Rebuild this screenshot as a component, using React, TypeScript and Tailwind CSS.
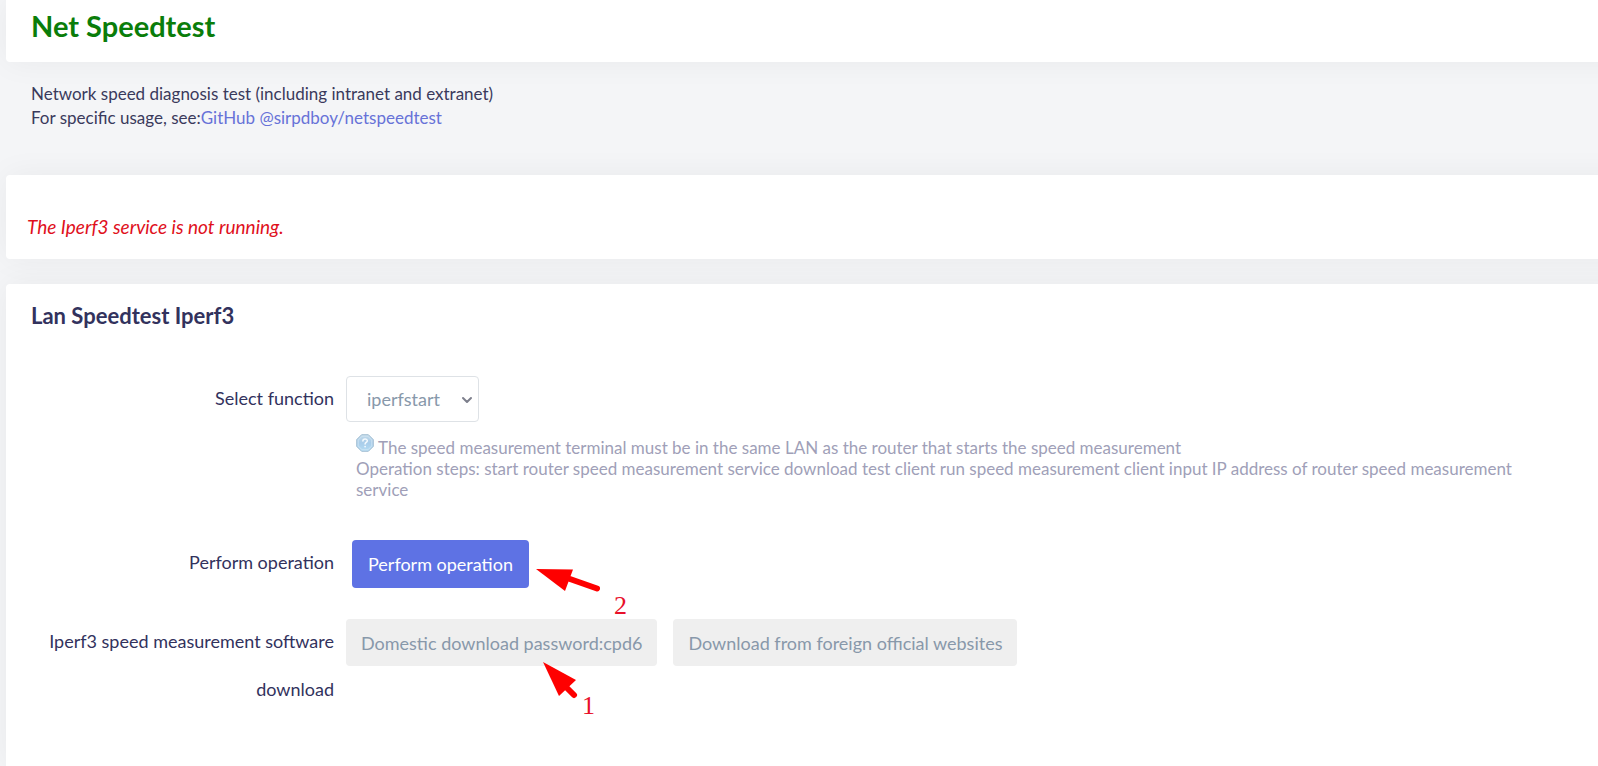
import type { ReactNode } from "react"
import { ChevronDown } from "lucide-react"
import { clsx } from "clsx"

interface CardProps {
  className?: string
  children: ReactNode
}

// Cards bleed past the right edge of the window
function Card({ className, children }: CardProps) {
  return (
    <section className={clsx("-mr-8 bg-white shadow-[0_0_32px_0_rgba(0,0,0,0.05)]", className)}>
      {children}
    </section>
  )
}

interface FieldRowProps {
  label: string
  htmlFor: string
  className?: string
  children: ReactNode
}

function FieldRow({ label, htmlFor, className, children }: FieldRowProps) {
  return (
    <div className={clsx("flex items-start gap-3", className)}>
      <label htmlFor={htmlFor} className="-mt-0.5 w-[328px] shrink-0 pl-6 text-right leading-[48px]">
        {label}
      </label>
      <div className="min-w-0 flex-1">{children}</div>
    </div>
  )
}

function HelpIcon() {
  return (
    <svg viewBox="0 0 18 18" className="mr-1 inline-block size-[18px] -translate-y-0.5 align-baseline" aria-hidden="true">
      <defs>
        <linearGradient id="help-fill" x1="0" y1="0" x2="0" y2="1">
          <stop offset="0" stopColor="#c3d9e8" />
          <stop offset="0.5" stopColor="#a9cdea" />
          <stop offset="1" stopColor="#b4dcf4" />
        </linearGradient>
      </defs>
      <path d="M5.6 0.7h6.8l4.9 4.9v6.8l-4.9 4.9H5.6L0.7 12.4V5.6z" fill="url(#help-fill)" stroke="#a4bfd3" strokeLinejoin="round" />
      <path d="M6.1 2.2h5.8l3.9 3.9v5.8l-3.9 3.9H6.1l-3.9-3.9V6.1z" fill="none" stroke="#d3e7f4" strokeWidth="0.8" />
      <path d="M6.9 7c0-2.6 4.4-2.5 4.4-0.2 0 1.6-2.2 1.5-2.2 3.2" fill="none" stroke="#f4fafe" strokeWidth="1.5" strokeLinecap="round" />
      <circle cx="9.1" cy="12.6" r="0.9" fill="#f4fafe" />
    </svg>
  )
}

const downloads = [
  { id: "download-domestic", text: "Domestic download password:cpd6" },
  { id: "download-foreign", text: "Download from foreign official websites" },
]

export default function App() {
  return (
    <main className="min-h-screen overflow-x-hidden bg-[#f4f5f7] pl-[6px] font-['Lato','Open_Sans',sans-serif] text-lg text-[#32325d]">
      <Card className="rounded-bl px-[25px] pt-2 pb-[18px]">
        <h1 className="text-[29px] leading-9 font-bold text-[#0a7d0a]">Net Speedtest</h1>
      </Card>

      <p className="px-[25px] pt-5 pb-[45px] text-[17px] leading-6 text-[#3a3a5c]">
        Network speed diagnosis test (including intranet and extranet)
        <br />
        For specific usage, see:
        <a href="https://github.com/sirpdboy/netspeedtest" className="text-[#6772d8]">
          GitHub @sirpdboy/netspeedtest
        </a>
      </p>

      <Card className="rounded-l px-[21px] pt-[38px] pb-[18px]">
        <p className="text-[19px] leading-7 text-[#e0101c] italic">The Iperf3 service is not running.</p>
      </Card>

      <Card className="mt-[25px] min-h-[482px] rounded-tl pt-4">
        <h2 className="px-[25px] text-[22px] leading-8 font-bold">Lan Speedtest Iperf3</h2>

        <FieldRow label="Select function" htmlFor="iperf-function" className="mt-11">
          <div className="relative inline-block">
            <select
              id="iperf-function"
              className="h-[46px] w-[133px] appearance-none rounded border border-[#dee2e6] bg-white pl-5 text-[#8898aa]"
            >
              <option>iperfstart</option>
            </select>
            <ChevronDown className="pointer-events-none absolute top-4 right-1 size-4 text-[#7d7f8c]" strokeWidth={3} />
          </div>
          <p className="mt-[14px] mr-[92px] ml-[10px] text-[17px] leading-[21px] text-[#a09fb8]">
            <HelpIcon />
            The speed measurement terminal must be in the same LAN as the router that starts the speed measurement
            <br />
            Operation steps: start router speed measurement service download test client run speed measurement client
            input IP address of router speed measurement service
          </p>
        </FieldRow>

        <FieldRow label="Perform operation" htmlFor="perform-operation" className="mt-10">
          <div className="relative ml-[6px] inline-block">
            <button
              id="perform-operation"
              type="button"
              className="h-12 rounded bg-[#5e72e4] px-4 text-white"
            >
              Perform operation
            </button>
            <svg viewBox="0 0 68 28" className="absolute top-[27px] left-full ml-[6px] h-7 w-[68px]" aria-hidden="true">
              <path d="M35 12L62 21.5" stroke="#fe0000" strokeWidth="6" strokeLinecap="round" />
              <path d="M1 2L38 2.5L30 24z" fill="#fe0000" />
            </svg>
            <span className="absolute top-[52px] left-full ml-[85px] font-['Liberation_Serif',serif] text-[26px] leading-7 text-[#e8102a]">
              2
            </span>
          </div>
        </FieldRow>

        <FieldRow label="Iperf3 speed measurement software download" htmlFor="download-domestic" className="mt-[31px]">
          <div className="relative flex flex-wrap gap-4">
            {downloads.map(({ id, text }) => (
              <button key={id} id={id} type="button" className="h-[47px] rounded bg-[#efefef] px-[15px] text-[#8898aa]">
                {text}
              </button>
            ))}
            <svg viewBox="0 0 36 40" className="absolute top-[42px] left-[196px] h-10 w-9" aria-hidden="true">
              <path d="M24 26L32 34" stroke="#fe0000" strokeWidth="6" strokeLinecap="round" />
              <path d="M1 1L34 19L17 35z" fill="#fe0000" />
            </svg>
            <span className="absolute top-[73px] left-[236px] font-['Liberation_Serif',serif] text-[26px] leading-7 text-[#e8102a]">
              1
            </span>
          </div>
        </FieldRow>
      </Card>
    </main>
  )
}
